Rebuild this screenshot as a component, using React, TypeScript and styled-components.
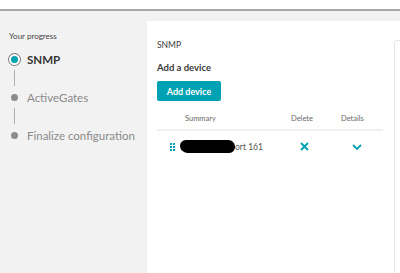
import {createGlobalStyle} from 'styled-components';
import styled from 'styled-components';

const teal = '#00a1b2';

const GlobalStyle = createGlobalStyle`
  html, body {
    margin: 0;
    padding: 0;
    background: #ffffff;
    font-family: Lato, "Open Sans", sans-serif;
  }
`;

const Page = styled.div`
  width: 400px;
  height: 273px;
  display: flex;
  flex-direction: column;
  overflow: hidden;
`;

const TopStrip = styled.div`
  height: 9px;
  background: #ffffff;
  border-bottom: 2px solid #a8a8a8;
`;

const Body = styled.div`
  flex: 1;
  display: flex;
  background: #f2f2f2;
`;

const Sidebar = styled.div`
  width: 138px;
  padding: 20px 0 0 9px;
  display: flex;
  flex-direction: column;
`;

const ProgressLabel = styled.div`
  font-size: 8px;
  color: #454545;
  margin-bottom: 11px;
`;

const Step = styled.div`
  display: flex;
  align-items: center;
  height: 14px;
  gap: 7px;
`;

const StepMarker = styled.div`
  width: 11px;
  display: flex;
  justify-content: center;
`;

const ActiveDot = styled.span`
  width: 7px;
  height: 7px;
  border-radius: 50%;
  background: ${teal};
  border: 2px solid #ffffff;
  box-shadow: 0 0 0 1px #7a7a7a;
`;

const Dot = styled.span`
  width: 7px;
  height: 7px;
  border-radius: 50%;
  background: #8c8c8c;
`;

const StepText = styled.span<{$active?: boolean}>`
  font-size: 11.5px;
  font-weight: ${p => (p.$active ? 700 : 400)};
  color: ${p => (p.$active ? '#353535' : '#8a8a8a')};
`;

const Connector = styled.div`
  width: 1px;
  height: 16px;
  margin: 4px 0 4px 5px;
  background: #b0b0b0;
`;

const Panel = styled.div`
  flex: 1;
  margin-top: 10px;
  background: #ffffff;
  display: flex;
  padding-left: 10px;
`;

const Main = styled.div`
  width: 226px;
  padding-top: 19px;
  display: flex;
  flex-direction: column;
`;

const Heading = styled.div`
  font-size: 8.5px;
  color: #3a3a3a;
  margin-bottom: 12px;
`;

const SubHeading = styled.div`
  font-size: 9.5px;
  font-weight: 700;
  color: #3a3a3a;
  margin-bottom: 8px;
`;

const Button = styled.button`
  align-self: flex-start;
  width: 64px;
  height: 20px;
  border: none;
  border-radius: 2px;
  background: ${teal};
  color: #ffffff;
  font-family: inherit;
  font-size: 9px;
  font-weight: 700;
  padding: 0;
`;

const HeaderRow = styled.div`
  display: grid;
  grid-template-columns: 1fr 48px 46px;
  margin-top: 13px;
  padding-bottom: 6px;
  border-bottom: 2px solid #f0f0f0;
  font-size: 7.5px;
  color: #6a6a6a;
`;

const HeaderCell = styled.div<{$pad?: number}>`
  padding-left: ${p => p.$pad ?? 0}px;
`;

const DataRow = styled.div`
  display: grid;
  grid-template-columns: 1fr 48px 46px;
  align-items: center;
  height: 31px;
  font-size: 8.5px;
  color: #555555;
`;

const SummaryCell = styled.div`
  display: flex;
  align-items: center;
  padding-left: 13px;
`;

const Redacted = styled.span`
  width: 55px;
  height: 13px;
  margin-left: 5px;
  border-radius: 7px 8px 7px 9px;
  background: #000000;
`;

const IconCell = styled.div<{$pad: number}>`
  display: flex;
  align-items: center;
  padding-left: ${p => p.$pad}px;
`;

const SideCard = styled.div`
  flex: 1;
  margin: 19px 0 0 11px;
  border: 1px solid #e6e6e6;
  border-right: none;
  border-bottom: none;
  border-top-left-radius: 3px;
`;

const DragHandle = () => (
  <svg width="5" height="8" viewBox="0 0 5 8">
    {[0, 3, 6].map(y =>
      [0, 3].map(x => (
        <rect key={`${x}-${y}`} x={x} y={y} width="2" height="2" fill={teal} />
      )),
    )}
  </svg>
);

const CloseIcon = () => (
  <svg width="9" height="9" viewBox="0 0 9 9">
    <path d="M1 1L8 8M8 1L1 8" stroke={teal} strokeWidth="1.8" />
  </svg>
);

const ChevronIcon = () => (
  <svg width="10" height="6" viewBox="0 0 10 6">
    <path d="M1 1L5 5L9 1" stroke={teal} strokeWidth="1.8" fill="none" />
  </svg>
);

const App = () => {
  return (
    <Page>
      <GlobalStyle />
      <TopStrip />
      <Body>
        <Sidebar>
          <ProgressLabel>Your progress</ProgressLabel>
          <Step>
            <StepMarker>
              <ActiveDot />
            </StepMarker>
            <StepText $active>SNMP</StepText>
          </Step>
          <Connector />
          <Step>
            <StepMarker>
              <Dot />
            </StepMarker>
            <StepText>ActiveGates</StepText>
          </Step>
          <Connector />
          <Step>
            <StepMarker>
              <Dot />
            </StepMarker>
            <StepText>Finalize configuration</StepText>
          </Step>
        </Sidebar>
        <Panel>
          <Main>
            <Heading>SNMP</Heading>
            <SubHeading>Add a device</SubHeading>
            <Button>Add device</Button>
            <HeaderRow>
              <HeaderCell $pad={28}>Summary</HeaderCell>
              <HeaderCell $pad={2}>Delete</HeaderCell>
              <HeaderCell $pad={4}>Details</HeaderCell>
            </HeaderRow>
            <DataRow>
              <SummaryCell>
                <DragHandle />
                <Redacted />
                <span>ort 161</span>
              </SummaryCell>
              <IconCell $pad={11}>
                <CloseIcon />
              </IconCell>
              <IconCell $pad={15}>
                <ChevronIcon />
              </IconCell>
            </DataRow>
          </Main>
          <SideCard />
        </Panel>
      </Body>
    </Page>
  );
};

export default App;
